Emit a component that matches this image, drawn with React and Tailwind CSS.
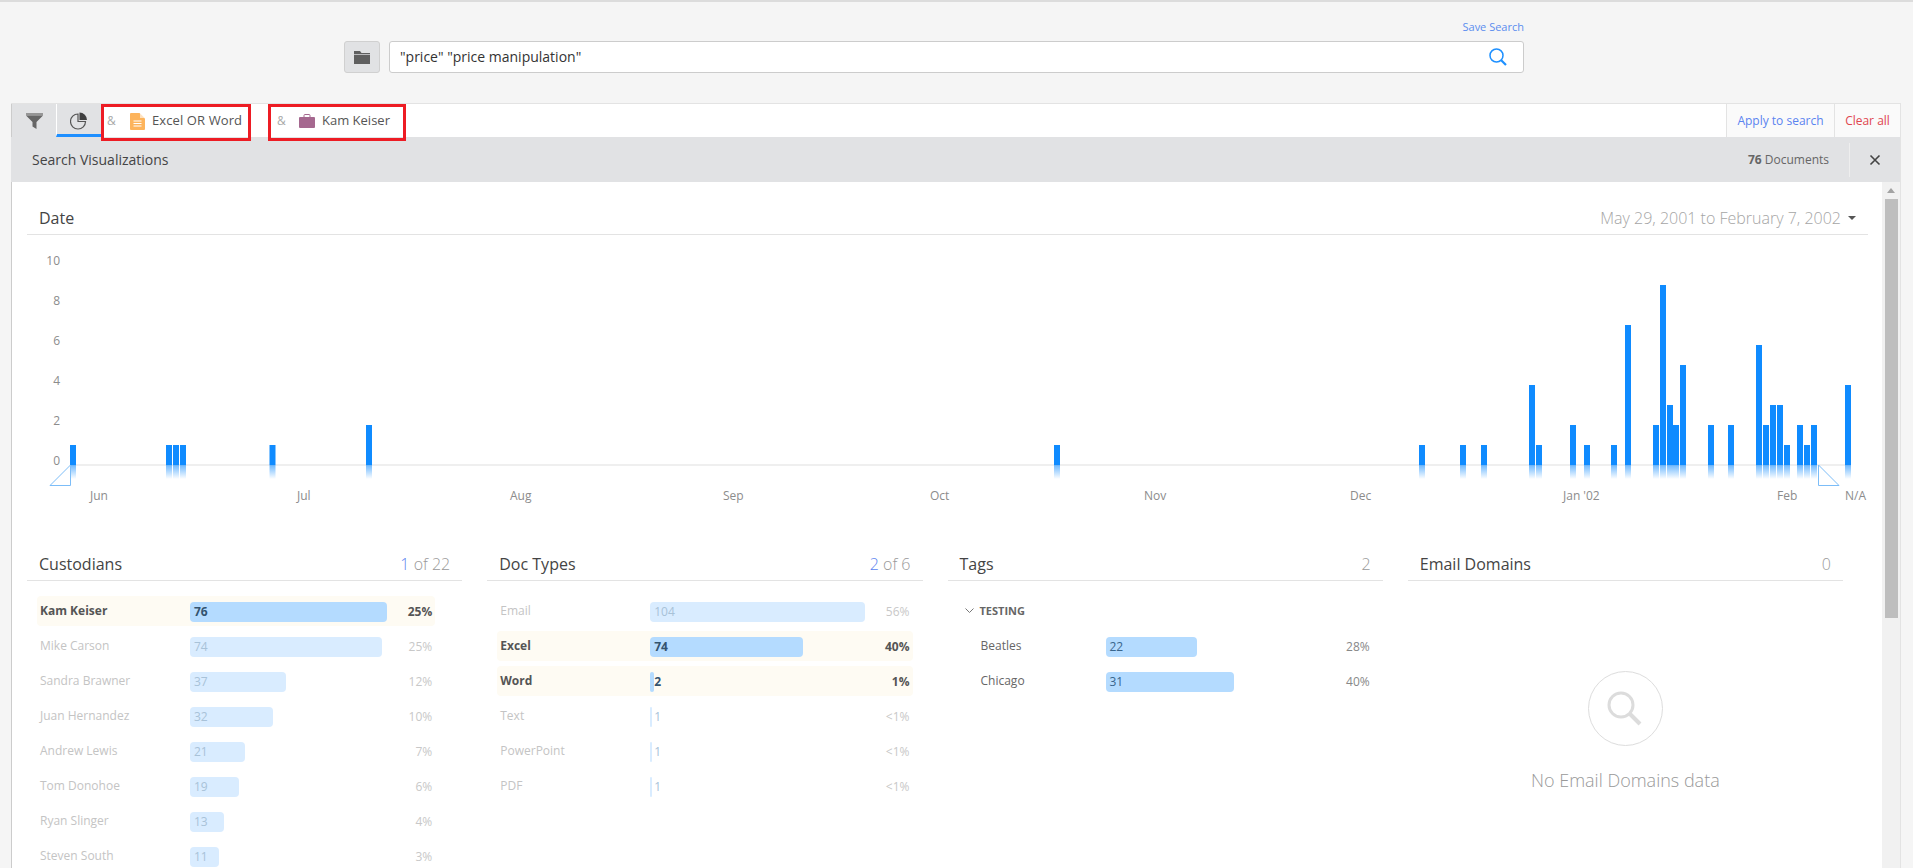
const custodians = [
  { name: 'Kam Keiser', count: 76, pct: '25%', w: 197, on: true },
  { name: 'Mike Carson', count: 74, pct: '25%', w: 192 },
  { name: 'Sandra Brawner', count: 37, pct: '12%', w: 96 },
  { name: 'Juan Hernandez', count: 32, pct: '10%', w: 83 },
  { name: 'Andrew Lewis', count: 21, pct: '7%', w: 55 },
  { name: 'Tom Donohoe', count: 19, pct: '6%', w: 49 },
  { name: 'Ryan Slinger', count: 13, pct: '4%', w: 34 },
  { name: 'Steven South', count: 11, pct: '3%', w: 29 },
];

const docTypes = [
  { name: 'Email', count: 104, pct: '56%', w: 215 },
  { name: 'Excel', count: 74, pct: '40%', w: 153, on: true },
  { name: 'Word', count: 2, pct: '1%', w: 4, on: true },
  { name: 'Text', count: 1, pct: '<1%', w: 2 },
  { name: 'PowerPoint', count: 1, pct: '<1%', w: 2 },
  { name: 'PDF', count: 1, pct: '<1%', w: 2 },
];

const tags = [
  { name: 'Beatles', count: 22, pct: '28%', w: 91 },
  { name: 'Chicago', count: 31, pct: '40%', w: 128 },
];

// [x, value] for each day that has documents
const bars = [
  [70, 1], [166, 1], [173, 1], [180, 1], [269.5, 1], [366, 2], [1054, 1],
  [1419, 1], [1460, 1], [1481, 1], [1529, 4], [1536, 1], [1570, 2], [1584, 1],
  [1611, 1], [1625, 7], [1653, 2], [1660, 9], [1667, 3], [1673, 2], [1680, 5],
  [1708, 2], [1728, 2], [1756, 6], [1763, 2], [1770, 3], [1777, 3], [1784, 1],
  [1797, 2], [1804, 1], [1811, 2], [1845, 4],
];

const months = [
  ['Jun', 90], ['Jul', 297], ['Aug', 510], ['Sep', 723], ['Oct', 930],
  ['Nov', 1144], ['Dec', 1350], ["Jan '02", 1563], ['Feb', 1777], ['N/A', 1845],
];

const Row = ({ item, labelClass, numClass, pctClass, labelW }) => (
  <div className={`flex h-[30px] items-start rounded-sm px-[3px] pt-[6px] text-xs ${item.on ? 'bg-[#fefbf3]' : ''}`}>
    <div className={`-mt-px shrink-0 leading-5 ${labelW} ${item.on ? 'font-bold text-[#555]' : labelClass}`}>{item.name}</div>
    <div className="relative h-5 flex-1">
      <div
        className={`h-5 rounded-sm ${item.on || numClass ? 'bg-[#b4dbff]' : 'bg-[#d9ecff]'}`}
        style={{ width: item.w }}
      />
      <span className={`absolute top-0 left-1 leading-5 ${item.on ? 'font-bold text-[#33536f]' : numClass || 'text-[#a8c2d8]'}`}>{item.count}</span>
    </div>
    <div className={`w-10 text-right leading-5 ${item.on ? 'font-bold text-[#555]' : pctClass}`}>{item.pct}</div>
  </div>
);

const Header = ({ title, children }) => (
  <div className="flex h-[33px] items-center justify-between border-b border-[#e3e3e3] px-3 text-base text-[#444]">
    <span>{title}</span>
    <span className="font-light text-[#999]">{children}</span>
  </div>
);

const Chart = () => (
  <svg className="block" width="1855" height="275" viewBox="27 235 1855 275">
    <defs>
      <linearGradient id="fade" x1="0" y1="0" x2="0" y2="1">
        <stop offset="0" stopColor="#0f8bff" stopOpacity="0.6" />
        <stop offset="1" stopColor="#0f8bff" stopOpacity="0" />
      </linearGradient>
    </defs>
    {[10, 8, 6, 4, 2, 0].map((n, i) => (
      <text key={n} x="60" y={265 + i * 40} textAnchor="end" fontSize="12" fill="#8c8c8c">{n}</text>
    ))}
    <rect x="70" y="464" width="1781" height="2" fill="#efefef" />
    {bars.map(([x, v]) => (
      <g key={x}>
        <rect x={x} y={465 - v * 20} width="6" height={v * 20} fill="#0f8bff" />
        <rect x={x} y="465" width="6" height="14" fill="url(#fade)" />
      </g>
    ))}
    <path d="M50 485.5L70.5 465V485.5Z" fill="#fff" stroke="#7cbdf8" />
    <path d="M1818.5 465L1839 485.5H1818.5Z" fill="#fff" stroke="#7cbdf8" />
    {months.map(([m, x]) => (
      <text key={m} x={x} y="500" fontSize="12" fill="#8c8c8c">{m}</text>
    ))}
  </svg>
);

export default function App() {
  return (
    <div className="h-[868px] overflow-hidden border-t-2 border-[#dcdcdc] bg-[#f5f5f5] font-['Open_Sans',sans-serif]">
      {/* search box */}
      <div className="ml-[344px] h-[101px] w-[1180px]">
        <div className="h-[39px] pt-[17px] text-right text-[11px] leading-4 text-[#5b8def]">Save Search</div>
        <div className="flex gap-[9px]">
          <button className="flex h-8 w-9 items-center justify-center rounded-[3px] border border-[#d0d0d0] bg-[#e1e2e4]">
            <svg width="16" height="13" viewBox="0 0 16 13" fill="#5f5f5f">
              <path d="M0 0h6l1.500 2H16v1H0z" />
              <path d="M0 3.700h16V13H0z" />
            </svg>
          </button>
          <div className="flex h-8 flex-1 items-center justify-between rounded-[3px] border border-[#ccc] bg-white pr-4 pl-[10px] text-sm text-[#333]">
            <span>"price" "price manipulation"</span>
            <svg width="18" height="18" viewBox="0 0 18 18" fill="none" stroke="#1e90ff">
              <circle cx="7.500" cy="7.500" r="6.500" strokeWidth="1.500" />
              <path d="M12.200 12.200L17 17" strokeWidth="2.200" />
            </svg>
          </div>
        </div>
      </div>

      <div className="ml-[11px] flex h-[766px] w-[1890px] flex-col border-r border-[#e3e3e3]">
        {/* tab bar */}
        <div className="flex h-[34px] shrink-0 border-t border-[#e3e3e3] bg-white">
          <div className="flex w-[45px] items-center justify-center border-l border-[#ccc] bg-[#e1e2e4]">
            <svg width="17" height="16" viewBox="0 0 17 16">
              <path d="M0 0h17v2.500H0z" fill="#969696" />
              <path d="M0 2.500h17L10.500 9v7L6.500 13.500V9z" fill="#666" />
            </svg>
          </div>
          <div className="flex w-[45px] items-center justify-center border-b-[3px] border-l border-b-[#1e8fff] border-l-white bg-[#e1e2e4] pt-[3px]">
            <svg width="18" height="18" viewBox="0 0 18 18">
              <path d="M8 2A7.500 7.500 0 1 0 15.500 9.500H8z" fill="none" stroke="#555" strokeWidth="1.200" />
              <path d="M9.500 0.500A7.500 7.500 0 0 1 17 8H9.500z" fill="#3f3f3f" />
            </svg>
          </div>
          <div className="relative z-10 flex h-[37px] w-[150px] items-center border-[3px] border-[#ed1c24] pb-[3px] pl-[3px] text-xs">
            <span className="w-[23px] text-[#aaa]">&amp;</span>
            <svg width="15" height="17" viewBox="0 0 15 17" className="mr-[7px] shrink-0">
              <path d="M0 1a1 1 0 0 1 1-1h8.500L15 5.500V16a1 1 0 0 1-1 1H1a1 1 0 0 1-1-1z" fill="#fdb45c" />
              <path d="M10 0l5 5h-5z" fill="#fff" opacity="0.6" />
              <path d="M3.500 8h8M3.500 10.500h8M3.500 13h8" stroke="#fff" strokeWidth="1" />
            </svg>
            <span className="text-[13px] tracking-[0.1px] whitespace-nowrap text-[#555]">Excel OR Word</span>
          </div>
          <div className="relative z-10 ml-[17px] flex h-[37px] w-[138px] items-center border-[3px] border-[#ed1c24] pb-[3px] pl-[6px] text-xs">
            <span className="w-[22px] text-[#aaa]">&amp;</span>
            <svg width="16" height="14" viewBox="0 0 16 14" className="mr-[7px] shrink-0">
              <path d="M5 3V1.500A1 1 0 0 1 6 .5h4a1 1 0 0 1 1 1V3" fill="none" stroke="#a5688f" />
              <path d="M1 3h14a1 1 0 0 1 1 1v9a1 1 0 0 1-1 1H1a1 1 0 0 1-1-1V4a1 1 0 0 1 1-1z" fill="#a5688f" />
            </svg>
            <span className="text-[13px] whitespace-nowrap text-[#555]">Kam Keiser</span>
          </div>
          <div className="ml-auto flex w-[108px] items-center justify-center border-l border-[#e3e3e3] bg-[#fafafa] text-xs text-[#5b84f0]">Apply to search</div>
          <div className="flex w-[66px] items-center justify-center border-l border-[#e3e3e3] bg-[#fafafa] text-xs text-[#e0464f]">Clear all</div>
        </div>

        {/* band */}
        <div className="flex h-[45px] shrink-0 items-center bg-[#e1e2e4] pl-[21px] text-sm text-[#444]">
          <span className="pt-px">Search Visualizations</span>
          <span className="ml-auto text-xs text-[#666]"><b>76</b> Documents</span>
          <div className="ml-[20px] flex h-[34px] w-[51px] items-center justify-center border-l border-[#eee]">
            <svg width="12" height="12" viewBox="0 0 12 12" stroke="#444" strokeWidth="1.600">
              <path d="M1.500 1.500l9 9M10.500 1.500l-9 9" />
            </svg>
          </div>
        </div>

        <div className="flex min-h-0 flex-1 border-l border-[#ccc] bg-white">
          <div className="min-w-0 flex-1 overflow-hidden pt-[20px] pl-[15px]">
            <div className="flex h-[33px] w-[1841px] items-center justify-between border-b border-[#e3e3e3] pr-[12px] pl-3 text-base text-[#444]">
              <span>Date</span>
              <span className="flex items-center gap-[7px] font-light text-[#a5a5a5]">
                May 29, 2001 to February 7, 2002
                <span className="h-0 w-0 border-x-[4px] border-t-[4px] border-x-transparent border-t-[#555]" />
              </span>
            </div>
            <Chart />
            {/* facet columns */}
            <div className="mt-[38px] grid w-[1816px] grid-cols-4 gap-x-[25px]">
              <div>
                <Header title="Custodians"><span className="text-[#5b84f0]">1</span> of 22</Header>
                <div className="mt-[15px] mr-[27px] ml-[10px] flex flex-col gap-[5px]">
                  {custodians.map((c) => (
                    <Row key={c.name} item={c} labelW="w-[150px]" labelClass="text-[#c4c4c4]" pctClass="text-[#c8c8c8]" />
                  ))}
                </div>
              </div>
              <div>
                <Header title="Doc Types"><span className="text-[#5b84f0]">2</span> of 6</Header>
                <div className="mx-[10px] mt-[15px] flex flex-col gap-[5px]">
                  {docTypes.map((c) => (
                    <Row key={c.name} item={c} labelW="w-[150px]" labelClass="text-[#c4c4c4]" pctClass="text-[#c8c8c8]" />
                  ))}
                </div>
              </div>
              <div>
                <Header title="Tags">2</Header>
                <div className="mt-[15px] flex h-[30px] items-center pl-[17px] text-[11px] font-bold text-[#666]">
                  <svg width="9" height="6" viewBox="0 0 9 6" fill="none" stroke="#777" className="mr-[6px]">
                    <path d="M.5.500l4 4 4-4" />
                  </svg>
                  TESTING
                </div>
                <div className="mt-[5px] mr-[10px] ml-[30px] flex flex-col gap-[5px]">
                  {tags.map((c) => (
                    <Row key={c.name} item={c} labelW="w-[125px]" labelClass="text-[#666]" numClass="text-[#39658c]" pctClass="text-[#888]" />
                  ))}
                </div>
              </div>
              <div>
                <Header title="Email Domains">0</Header>
                <div className="mt-[90px] flex flex-col items-center">
                  <div className="flex h-[75px] w-[75px] items-center justify-center rounded-full border border-[#ddd]">
                    <svg width="38" height="38" viewBox="0 0 38 38" fill="none" stroke="#dcdcdc">
                      <circle cx="15" cy="15" r="12" strokeWidth="3" />
                      <path d="M24 24L34 34" strokeWidth="4" />
                    </svg>
                  </div>
                  <div className="mt-5 text-lg font-light text-[#999]">No Email Domains data</div>
                </div>
              </div>
            </div>
          </div>

          {/* scrollbar */}
          <div className="flex w-[18px] shrink-0 flex-col items-center bg-[#f1f1f1]">
            <span className="mt-[6px] h-0 w-0 border-x-[4px] border-b-[5px] border-x-transparent border-b-[#a3a3a3]" />
            <div className="mt-[6px] h-[419px] w-[13px] bg-[#bebebe]" />
          </div>
        </div>
      </div>
    </div>
  );
}
